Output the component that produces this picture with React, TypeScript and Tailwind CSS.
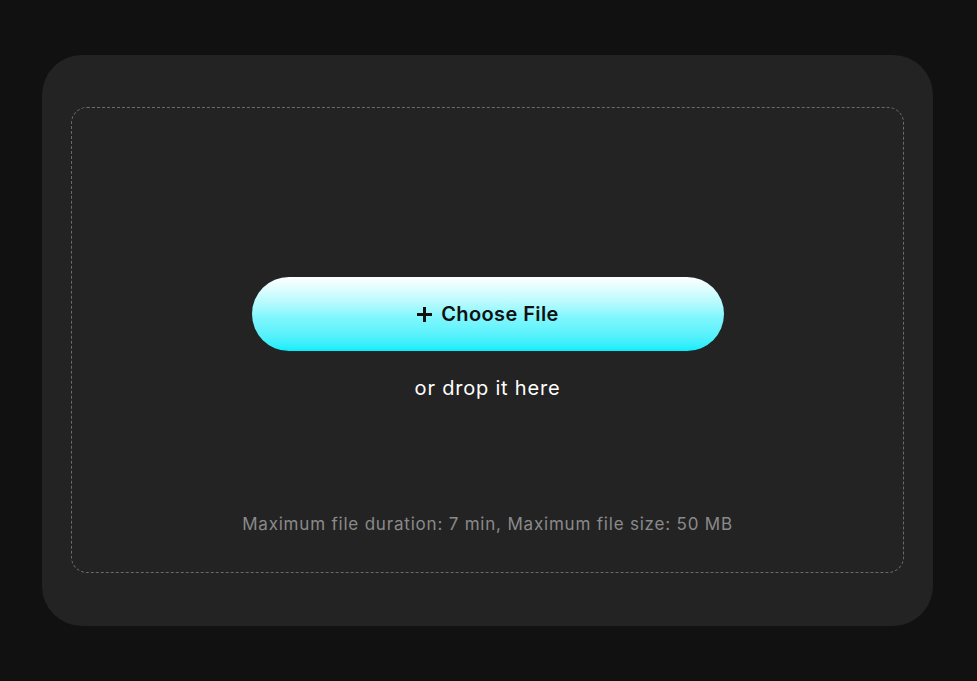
export default function App() {
  return (
    <div className="h-[681px] w-full bg-[#111111] pb-[55px] pl-[42px] pr-[44px] pt-[55px] font-['Inter','Noto_Sans',sans-serif]">
      <div className="flex h-full flex-col rounded-[40px] bg-[#232323] px-[29px] pb-[53px] pt-[52px]">
        <div className="flex flex-1 flex-col items-center rounded-[16px] border border-dashed border-[#6a6a6a] pb-[36px] pt-[169px]">
          <button className="flex h-[74px] w-[472px] items-center justify-center gap-2 rounded-full bg-gradient-to-b from-white via-[#7ff6fd] via-55% to-[#00eefb] text-[20px] font-semibold text-[#111]">
            <svg width="17" height="17" viewBox="0 0 17 17" fill="none">
              <path d="M8.5 1v15M1 8.5h15" stroke="#111" strokeWidth="3" />
            </svg>
            <span className="tracking-[0.4px]">Choose File</span>
          </button>
          <p className="mt-[23px] text-[20px] leading-[28px] tracking-[0.8px] text-white">or drop it here</p>
          <p className="mt-auto text-[17px] leading-[24px] tracking-[0.8px] text-[#8a8a8a]">
            Maximum file duration: 7 min, Maximum file size: 50 MB
          </p>
        </div>
      </div>
    </div>
  );
}
